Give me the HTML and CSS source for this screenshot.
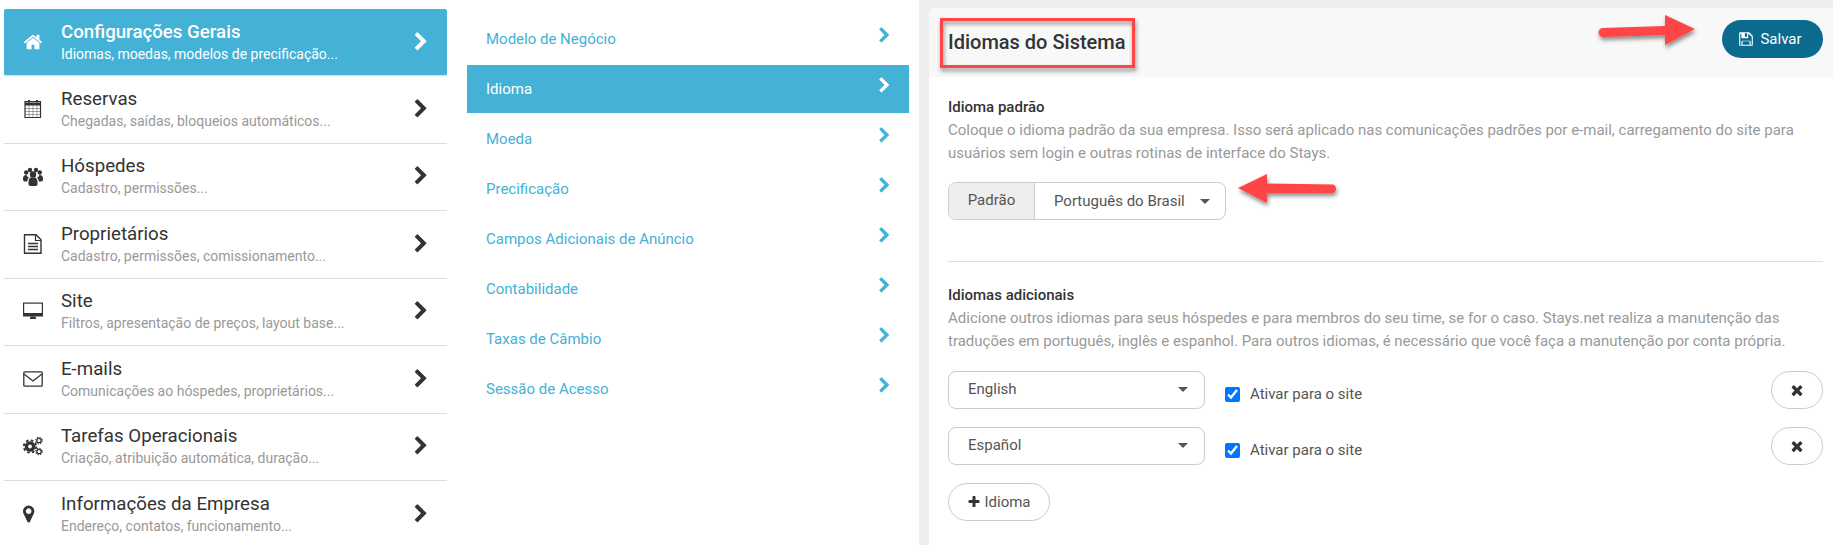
FILE: index.html
```html
<!DOCTYPE html>
<html lang="pt-BR">
  <head>
    <meta charset="UTF-8">
    <title>Idiomas do Sistema</title>
    <link rel="stylesheet" href="styles.css">
  </head>
  <body>
    <div class="app">
      <!-- main settings menu -->
      <ul class="menu">
        <li class="menu-item active">
          <svg class="menu-icon" viewBox="0 0 1792 1792"><path d="M1472 992v480q0 26-19 45t-45 19h-384v-384h-256v384h-384q-26 0-45-19t-19-45v-480q0-1 .5-3t.5-3l575-474 575 474q1 2 1 6zm223-69l-62 74q-8 9-21 11h-3q-13 0-21-7l-692-577-692 577q-12 8-24 7-13-2-21-11l-62-74q-8-10-7-23.5t11-20.5l719-599q32-26 76-26t76 26l244 204v-195q0-14 9-23t23-9h192q14 0 23 9t9 23v408l219 182q10 8 11 21.5t-7 23.5z"/></svg>
          <div class="menu-text"><h3>Configurações Gerais</h3><p>Idiomas, moedas, modelos de precificação...</p></div>
          <svg class="chevron" viewBox="0 0 1792 1792"><use href="#chev"/></svg>
        </li>
        <li class="menu-item">
          <svg class="menu-icon" viewBox="0 0 20 20"><path d="M1.500 3.500h15.500v16H1.500z" transform="translate(.5 -1)" fill="none" stroke="currentColor" stroke-width="1.200"/><path d="M2 3.500h16v3H2z"/><path d="M6 3.500V1M14 3.500V1" stroke="currentColor" stroke-width="2"/><path d="M2 9.500h16M2 12.500h16M2 15.500h16M6 6v12M10 6v12M14 6v12" fill="none" stroke="currentColor" stroke-width=".6" opacity=".7"/></svg>
          <div class="menu-text"><h3>Reservas</h3><p>Chegadas, saídas, bloqueios automáticos...</p></div>
          <svg class="chevron" viewBox="0 0 1792 1792"><use href="#chev"/></svg>
        </li>
        <li class="menu-item">
          <svg class="menu-icon" viewBox="0 0 20 20"><circle cx="3.200" cy="6.500" r="2.200"/><circle cx="16.800" cy="6.500" r="2.200"/><circle cx="7" cy="4" r="2.200"/><circle cx="13" cy="4" r="2.200"/><circle cx="10" cy="8.500" r="3.200"/><path d="M0 13c0-3 1-4 3.500-4 .6 1.500 1.500 2.300 2.500 2.800-1.200 1-1.800 2.200-1.800 3.700H1.500C.5 15.500 0 14.500 0 13zM20 13c0-3-1-4-3.500-4-.6 1.500-1.500 2.300-2.500 2.800 1.200 1 1.800 2.200 1.800 3.700h2.700c1 0 1.500-1 1.500-2.500z"/><path d="M5.500 16c0-3 1.500-4.500 2.500-4.500h4c1 0 2.500 1.500 2.500 4.500v2c0 1-.7 2-2 2h-5c-1.300 0-2-1-2-2z"/></svg>
          <div class="menu-text"><h3>Hóspedes</h3><p>Cadastro, permissões...</p></div>
          <svg class="chevron" viewBox="0 0 1792 1792"><use href="#chev"/></svg>
        </li>
        <li class="menu-item">
          <svg class="menu-icon" viewBox="0 0 20 20"><path d="M1.500.8h11.500l5 5v13.400H1.500z" fill="none" stroke="currentColor" stroke-width="1.400"/><path d="M12.500 1v5.500H18" fill="none" stroke="currentColor" stroke-width="1.200"/><path d="M5 9.500h10M5 12.500h10M5 15.500h10" stroke="currentColor" stroke-width="1.300"/></svg>
          <div class="menu-text"><h3>Proprietários</h3><p>Cadastro, permissões, comissionamento...</p></div>
          <svg class="chevron" viewBox="0 0 1792 1792"><use href="#chev"/></svg>
        </li>
        <li class="menu-item">
          <svg class="menu-icon" viewBox="0 0 20 20"><path d="M0 1.500h20v14H0z"/><path d="M1.200 2.700h17.600v9.300H1.200z" fill="#fff"/><path d="M7.500 15.500h5l.7 2.500H6.800z"/></svg>
          <div class="menu-text"><h3>Site</h3><p>Filtros, apresentação de preços, layout base...</p></div>
          <svg class="chevron" viewBox="0 0 1792 1792"><use href="#chev"/></svg>
        </li>
        <li class="menu-item">
          <svg class="menu-icon" viewBox="0 0 20 20"><rect x=".8" y="2.800" width="18.400" height="14.400" rx="1" fill="none" stroke="currentColor" stroke-width="1.300"/><path d="M1 5l9 7 9-7" fill="none" stroke="currentColor" stroke-width="1.300"/></svg>
          <div class="menu-text"><h3>E-mails</h3><p>Comunicações ao hóspedes, proprietários...</p></div>
          <svg class="chevron" viewBox="0 0 1792 1792"><use href="#chev"/></svg>
        </li>
        <li class="menu-item">
          <svg class="menu-icon" viewBox="0 0 20 20"><circle cx="7" cy="10.500" r="3.600" fill="none" stroke="currentColor" stroke-width="3.400"/><circle cx="7" cy="10.500" r="6.200" fill="none" stroke="currentColor" stroke-width="1.800" stroke-dasharray="2.600 2.270"/><circle cx="16" cy="4.500" r="2.200" fill="none" stroke="currentColor" stroke-width="1.300"/><circle cx="16" cy="4.500" r="3.300" fill="none" stroke="currentColor" stroke-width="1.100" stroke-dasharray="1.300 1.290"/><circle cx="16" cy="15.500" r="2.200" fill="none" stroke="currentColor" stroke-width="1.300"/><circle cx="16" cy="15.500" r="3.300" fill="none" stroke="currentColor" stroke-width="1.100" stroke-dasharray="1.300 1.290"/></svg>
          <div class="menu-text"><h3>Tarefas Operacionais</h3><p>Criação, atribuição automática, duração...</p></div>
          <svg class="chevron" viewBox="0 0 1792 1792"><use href="#chev"/></svg>
        </li>
        <li class="menu-item">
          <svg class="menu-icon" viewBox="256 -135 1807 1807"><path d="M1024 512q0-106-75-181t-181-75-181 75-75 181 75 181 181 75 181-75 75-181zm256 0q0 109-33 179l-364 774q-16 33-47.500 52t-67.500 19-67.500-19-46.500-52l-365-774q-33-70-33-179 0-212 150-362t362-150 362 150 150 362z"/></svg>
          <div class="menu-text"><h3>Informações da Empresa</h3><p>Endereço, contatos, funcionamento...</p></div>
          <svg class="chevron" viewBox="0 0 1792 1792"><use href="#chev"/></svg>
        </li>
      </ul>

      <!-- sub menu of the selected group -->
      <ul class="submenu">
        <li class="sub-item">Modelo de Negócio<svg class="sub-chevron" viewBox="0 0 1792 1792"><use href="#chev"/></svg></li>
        <li class="sub-item active">Idioma<svg class="sub-chevron" viewBox="0 0 1792 1792"><use href="#chev"/></svg></li>
        <li class="sub-item">Moeda<svg class="sub-chevron" viewBox="0 0 1792 1792"><use href="#chev"/></svg></li>
        <li class="sub-item">Precificação<svg class="sub-chevron" viewBox="0 0 1792 1792"><use href="#chev"/></svg></li>
        <li class="sub-item">Campos Adicionais de Anúncio<svg class="sub-chevron" viewBox="0 0 1792 1792"><use href="#chev"/></svg></li>
        <li class="sub-item">Contabilidade<svg class="sub-chevron" viewBox="0 0 1792 1792"><use href="#chev"/></svg></li>
        <li class="sub-item">Taxas de Câmbio<svg class="sub-chevron" viewBox="0 0 1792 1792"><use href="#chev"/></svg></li>
        <li class="sub-item">Sessão de Acesso<svg class="sub-chevron" viewBox="0 0 1792 1792"><use href="#chev"/></svg></li>
      </ul>

      <div class="content">
        <div class="panel">
          <div class="panel-head">
            <h2>Idiomas do Sistema</h2>
            <button class="btn-save">
              <svg class="save-icon" viewBox="0 0 1792 1792"><path d="M512 1536h768v-384h-768v384zm896 0h128v-840q0-14-10-38.500t-20-34.500l-281-281q-10-10-34-20t-39-10v416q0 40-28 68t-68 28h-576q-40 0-68-28t-28-68v-416h-128v1280h128v-416q0-40 28-68t68-28h832q40 0 68 28t28 68v416zm-384-928v-320q0-13-9.500-22.500t-22.500-9.500h-192q-13 0-22.500 9.500t-9.500 22.500v320q0 13 9.500 22.500t22.500 9.500h192q13 0 22.500-9.500t9.500-22.500zm640 32v928q0 40-28 68t-68 28h-1344q-40 0-68-28t-28-68v-1344q0-40 28-68t68-28h928q40 0 88 20t76 48l280 280q28 28 48 76t20 88z"/></svg>
              Salvar
            </button>
          </div>
          <div class="panel-body">
            <h4>Idioma padrão</h4>
            <p class="help">Coloque o idioma padrão da sua empresa. Isso será aplicado nas comunicações padrões por e-mail, carregamento do site para usuários sem login e outras rotinas de interface do Stays.</p>
            <div class="input-group">
              <span class="addon">Padrão</span>
              <span class="group-select">Português do Brasil<i class="caret"></i></span>
            </div>
            <hr class="divider">
            <h4>Idiomas adicionais</h4>
            <p class="help">Adicione outros idiomas para seus hóspedes e para membros do seu time, se for o caso. Stays.net realiza a manutenção das traduções em português, inglês e espanhol. Para outros idiomas, é necessário que você faça a manutenção por conta própria.</p>
            <div class="lang-row">
              <span class="select">English<i class="caret"></i></span>
              <label class="check"><input type="checkbox" checked>Ativar para o site</label>
              <button class="btn-remove"><svg class="x-icon" viewBox="0 0 1792 1792"><use href="#times"/></svg></button>
            </div>
            <div class="lang-row">
              <span class="select">Español<i class="caret"></i></span>
              <label class="check"><input type="checkbox" checked>Ativar para o site</label>
              <button class="btn-remove"><svg class="x-icon" viewBox="0 0 1792 1792"><use href="#times"/></svg></button>
            </div>
            <button class="btn-add"><svg class="plus-icon" viewBox="0 0 1792 1792"><path d="M1600 736v192q0 40-28 68t-68 28h-416v416q0 40-28 68t-68 28h-192q-40 0-68-28t-28-68v-416h-416q-40 0-68-28t-28-68v-192q0-40 28-68t68-28h416v-416q0-40 28-68t68-28h192q40 0 68 28t28 68v416h416q40 0 68 28t28 68z"/></svg>Idioma</button>
          </div>
        </div>
      </div>
    </div>

    <!-- red marks drawn on top of the screenshot, plus the shared icon shapes -->
    <svg class="marks" viewBox="0 0 1833 545">
      <defs>
        <path id="chev" d="M1363 877l-742 742q-19 19-45 19t-45-19l-166-166q-19-19-19-45t19-45l531-531-531-531q-19-19-19-45t19-45l166-166q19-19 45-19t45 19l742 742q19 19 19 45t-19 45z"/>
        <path id="times" d="M1490 1322q0 40-28 68l-136 136q-28 28-68 28t-68-28l-294-294-294 294q-28 28-68 28t-68-28l-136-136q-28-28-28-68t28-68l294-294-294-294q-28-28-28-68t28-68l136-136q28-28 68-28t68 28l294 294 294-294q28-28 68-28t68 28l136 136q28 28 28 68t-28 68l-294 294 294 294q28 28 28 68z"/>
        <filter id="markShadow" x="-20%" y="-40%" width="140%" height="180%">
          <feDropShadow dx="1" dy="3" stdDeviation="2" flood-color="#000" flood-opacity="0.45"/>
        </filter>
      </defs>
      <g filter="url(#markShadow)" fill="#ff4444">
        <rect x="941.500" y="19.500" width="192" height="47" fill="none" stroke="#ff4444" stroke-width="3"/>
        <path d="M1603 28l62-2V15l30 14-30 16V35l-62 2a4.500 4.500 0 0 1 0-9z"/>
        <path d="M1333 184.500l-66-1V174l-29 14 29 15v-10l66 0a4.500 4.500 0 0 0 0-8.500z"/>
      </g>
    </svg>
  </body>
</html>
```

FILE: styles.css
```css
* {
  box-sizing: border-box;
}
html, body {
  margin: 0;
  height: 545px;
  overflow: hidden;
}
body {
  position: relative;
  font-family: Roboto, "Liberation Sans", sans-serif;
  font-size: 15px;
  background-color: #fff;
  color: #333;
}
ul {
  list-style: none;
  margin: 0;
  padding: 0;
}
.app {
  display: flex;
  height: 545px;
}

/* main menu */
.menu {
  flex: 0 0 467px;
  padding: 9px 20px 0 4px;
}
.menu-item {
  display: flex;
  align-items: center;
  height: 67.5px;
  padding: 0 16px 1px 19px;
  border-bottom: 1px solid #ddd;
  color: #333;
}
.menu-item:first-child {
  height: 67px;
  border-radius: 2px;
}
.menu-item:last-child {
  border-bottom: 0;
}
.menu-item.active {
  background-color: #44b1d6;
  color: #fff;
}
.menu-icon {
  flex: 0 0 20px;
  width: 20px;
  height: 20px;
  margin-right: 18px;
  fill: currentColor;
}
.menu-text {
  flex: 1;
}
.menu-text h3 {
  margin: 0;
  font-size: 18.7px;
  line-height: 24px;
  font-weight: 400;
}
.menu-text p {
  margin: 0;
  font-size: 14px;
  line-height: 20px;
  color: #999;
}
.active .menu-text h3 {
  font-weight: 500;
}
.active .menu-text p {
  color: #fff;
}
.chevron {
  width: 20px;
  height: 20px;
  fill: currentColor;
}

/* sub menu */
.submenu {
  flex: 0 0 452px;
  padding: 15px 10px 0 0;
}
.sub-item {
  display: flex;
  align-items: center;
  justify-content: space-between;
  height: 48px;
  margin-bottom: 2px;
  padding: 0 16px 0 19px;
  color: #44b1d6;
}
.sub-item.active {
  background-color: #44b1d6;
  color: #fff;
}
.sub-chevron {
  width: 17px;
  height: 17px;
  margin-top: -8px;
  fill: currentColor;
}

/* right side */
.content {
  flex: 1;
  padding: 8px 0 0 10px;
  background-color: #eee;
}
.panel {
  height: 100%;
  background-color: #fff;
  border-radius: 8px 0 0 0;
}
.panel-head {
  display: flex;
  align-items: flex-start;
  justify-content: space-between;
  height: 69px;
  padding: 12px 10px 0 19px;
  background-color: #f8f8f8;
  border-radius: 8px 0 0 0;
}
.panel-head h2 {
  margin: 9px 0 0;
  font-size: 20px;
  line-height: 26px;
  font-weight: 500;
  color: #333;
}
.btn-save {
  display: flex;
  align-items: center;
  justify-content: center;
  width: 101px;
  height: 38px;
  padding: 0 5px 0 0;
  border: 0;
  border-radius: 19px;
  background-color: #0b6b8f;
  color: #fff;
  font: inherit;
}
.save-icon {
  width: 16px;
  height: 16px;
  margin-right: 6px;
  fill: #fff;
}
.panel-body {
  padding: 19px 10px 0 19px;
}
.panel-body h4 {
  margin: 0;
  font-size: 15px;
  line-height: 23px;
  font-weight: 500;
}
.help {
  margin: 0;
  max-width: 874px;
  line-height: 23px;
  color: #999;
}
.input-group {
  display: inline-flex;
  height: 38px;
  margin-top: 17px;
  border: 1px solid #ccc;
  border-radius: 8px;
  color: #555;
}
.addon {
  display: flex;
  align-items: center;
  justify-content: center;
  width: 86px;
  border-right: 1px solid #ccc;
  border-radius: 7px 0 0 7px;
  background-color: #eee;
  padding-bottom: 2px;
}
.group-select {
  display: flex;
  align-items: center;
  justify-content: space-between;
  width: 190px;
  padding: 0 15px 0 19px;
}
.caret {
  width: 0;
  height: 0;
  border-top: 5px solid #555;
  border-left: 5px solid transparent;
  border-right: 5px solid transparent;
}
.divider {
  height: 1px;
  margin: 41px 0 22px 0;
  border: 0;
  background-color: #ddd;
}
.lang-row {
  display: flex;
  align-items: center;
  height: 38px;
  margin-top: 18px;
}
.select {
  display: flex;
  align-items: center;
  justify-content: space-between;
  width: 257px;
  height: 38px;
  padding: 0 16px 2px 19px;
  border: 1px solid #ccc;
  border-radius: 8px;
  color: #555;
}
.check {
  display: flex;
  align-items: center;
  margin: 8px 0 0 20px;
  color: #555;
}
.check input {
  width: 15px;
  height: 15px;
  margin: 0 10px 0 0;
}
.btn-remove {
  display: flex;
  align-items: center;
  justify-content: center;
  width: 52px;
  height: 38px;
  margin-left: auto;
  padding: 0;
  border: 1px solid #ccc;
  border-radius: 19px;
  background-color: #fff;
}
.x-icon {
  width: 16px;
  height: 16px;
  fill: #333;
}
.btn-add {
  display: flex;
  align-items: center;
  justify-content: center;
  width: 102px;
  height: 38px;
  margin-top: 18px;
  padding: 0;
  border: 1px solid #ccc;
  border-radius: 19px;
  background-color: #fff;
  color: #555;
  font: inherit;
}
.plus-icon {
  width: 14px;
  height: 14px;
  margin-right: 3px;
  fill: #333;
}

/* annotations */
.marks {
  position: absolute;
  left: 0;
  top: 0;
  width: 1833px;
  height: 545px;
  pointer-events: none;
}
```
